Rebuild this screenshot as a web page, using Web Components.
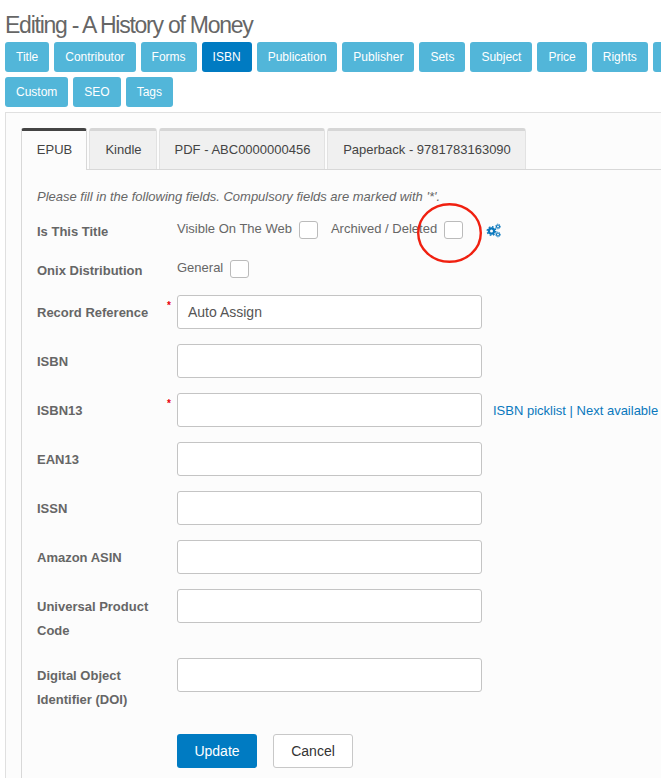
<!DOCTYPE html>
<html>
<head>
<meta charset="utf-8">
<title>Editing - A History of Money</title>
<style>
  html, body { margin: 0; height: 778px; overflow: hidden; background: #fff; }
  body { font-family: "Liberation Sans", Arial, sans-serif; color: #666; }
</style>
</head>
<body>
<edit-page></edit-page>

<script>
class NavButton extends HTMLElement {
  constructor() {
    super();
    this.attachShadow({ mode: "open" });
    this.shadowRoot.innerHTML = `
      <style>
        :host { display:block; height:30px; min-width:22px; box-sizing:border-box; padding:0 11px; border-radius:3px;
          background:#52b6d9; color:#fff; font-size:12px; line-height:30px; white-space:nowrap; }
        :host([active]) { background:#007bc2; }
      </style>
      <slot></slot>`;
  }
}

class TabItem extends HTMLElement {
  constructor() {
    super();
    this.attachShadow({ mode: "open" });
    this.shadowRoot.innerHTML = `
      <style>
        :host { display:block; box-sizing:border-box; height:41px; text-align:center; padding-left:1px;
          border:1px solid #e2e2e2; border-top:3px solid #d6d6d6; border-bottom:0; border-radius:3px 3px 0 0;
          background:#f0f0f0; color:#444; font-size:13px; line-height:38px; white-space:nowrap; }
        :host([active]) { background:#fcfcfc; border-top-color:#444; border-left-color:#d8d8d8; border-right-color:#d8d8d8;
          height:42px; margin-bottom:-1px; position:relative; }
      </style>
      <slot></slot>`;
  }
}

class CheckItem extends HTMLElement {
  constructor() {
    super();
    this.attachShadow({ mode: "open" });
    this.shadowRoot.innerHTML = `
      <style>
        :host { display:flex; align-items:center; gap:7px; font-size:13px; color:#666; white-space:nowrap; }
        .box { width:19px; height:18px; box-sizing:border-box; border:1px solid #bbb; border-radius:3px; background:#fff; margin-top:1px; }
        .txt { margin-top:-2px; }
      </style>
      <span class="txt"><slot></slot></span><span class="box"></span>`;
  }
}

class TextField extends HTMLElement {
  static get observedAttributes() { return ["value"]; }
  constructor() {
    super();
    this.attachShadow({ mode: "open" });
    this.shadowRoot.innerHTML = `
      <style>
        :host { display:block; width:305px; height:34px; box-sizing:border-box; padding:0 10px; border:1px solid #c4c4c4;
          border-radius:3px; background:#fff; color:#555; font-size:14px; line-height:32px; }
      </style>
      <span id="v"></span>`;
  }
  connectedCallback() { this.render(); }
  attributeChangedCallback() { this.render(); }
  render() { this.shadowRoot.getElementById("v").textContent = this.getAttribute("value") || ""; }
}

class FormRow extends HTMLElement {
  static get observedAttributes() { return ["label", "required"]; }
  constructor() {
    super();
    this.attachShadow({ mode: "open" });
    this.shadowRoot.innerHTML = `
      <style>
        :host { display:grid; grid-template-columns:140px 1fr; margin-bottom:15px; }
        .lab { position:relative; padding-top:var(--lab-top, 6px); font-size:13px; font-weight:bold; line-height:24px; color:#666; }
        .lab b { position:absolute; right:6px; top:5px; color:#e8000d; font-size:10px; line-height:12px; display:none; }
        :host([required]) .lab b { display:block; }
        .ctl { display:flex; align-items:flex-start; min-height:34px; }
      </style>
      <div class="lab"><span id="l"></span><b>*</b></div>
      <div class="ctl"><slot></slot></div>`;
  }
  connectedCallback() { this.render(); }
  attributeChangedCallback() { this.render(); }
  render() { this.shadowRoot.getElementById("l").innerHTML = this.getAttribute("label") || ""; }
}

class EditPage extends HTMLElement {
  constructor() {
    super();
    this.attachShadow({ mode: "open" });
    const nav = ["Title", "Contributor", "Forms", "ISBN", "Publication", "Publisher", "Sets", "Subject", "Price", "Rights", "", "Custom", "SEO", "Tags"];
    const tabs = [["EPUB", 66], ["Kindle", 68], ["PDF - ABC0000000456", 166], ["Paperback - 9781783163090", 199]];
    const fields = [
      ["Record Reference", "Auto Assign", true],
      ["ISBN"],
      ["ISBN13", "", true, true],
      ["EAN13"],
      ["ISSN"],
      ["Amazon ASIN"],
      ["Universal Product<br>Code"],
      ["Digital Object<br>Identifier (DOI)"]
    ];
    this.shadowRoot.innerHTML = `
      <style>
        :host { display:block; width:760px; padding:0 0 0 5px; box-sizing:border-box; position:relative; font-family:"Liberation Sans", Arial, sans-serif; }
        h1 { margin:0; height:42px; padding-top:12px; box-sizing:border-box; font-size:23px; line-height:26px; font-weight:normal; letter-spacing:-1.25px; color:#666; }
        .nav { display:flex; flex-wrap:wrap; gap:5px; width:700px; }
        .nav .blank { width:50px; }
        .panel { margin-top:5px; border:2px solid #e0e0e0; border-width:1px 0 0 1px; background:#fcfcfc; padding:15px 0 0 15px; height:700px; box-sizing:border-box; }
        .tabs { display:flex; gap:2px; border-bottom:1px solid #d8d8d8; height:41px; }
        .body { border-left:1px solid #d8d8d8; padding:0 0 20px 15px; }
        .note { margin:0; height:50px; padding-top:19px; box-sizing:border-box; font-size:13px; line-height:16px; font-style:italic; color:#666; }
        .checks { display:flex; align-items:center; gap:13px; }
        form-row.c1 { margin-bottom:10px; height:29px; --lab-top:0px; }
        form-row.c2 { margin-bottom:7px; height:29px; --lab-top:0px; }
        .gear { width:15px; height:15px; margin-left:10px; margin-top:2px; }
        .links { margin:9px 0 0 11px; font-size:13px; line-height:18px; color:#0a78bd; white-space:nowrap; }
        .acts { display:flex; gap:16px; padding:7px 0 0 140px; }
        .btn { height:34px; width:80px; box-sizing:border-box; border-radius:3px; text-align:center; font-size:14px; line-height:34px; }
        .up { background:#007bc2; color:#fff; }
        .ca { background:#fff; border:1px solid #c8c8c8; color:#333; line-height:32px; }
        .ring { position:absolute; left:417px; top:203px; width:65px; height:60px; }
      </style>
      <h1>Editing - A History of Money</h1>
      <div class="nav">
        ${nav.map(n => `<nav-button class="${n ? "" : "blank"}" ${n === "ISBN" ? "active" : ""}>${n}</nav-button>`).join("")}
      </div>
      <div class="panel">
        <div class="tabs">
          ${tabs.map((t, i) => `<tab-item style="width:${t[1]}px" ${i === 0 ? "active" : ""}>${t[0]}</tab-item>`).join("")}
        </div>
        <div class="body">
          <p class="note">Please fill in the following fields. Compulsory fields are marked with '*'.</p>
          <form-row class="c1" label="Is This Title">
            <div class="checks">
              <check-item>Visible On The Web</check-item>
              <check-item>Archived / Deleted</check-item>
              <svg class="gear" viewBox="0 0 15 15" fill="none" stroke="#0a78bd">
                <circle cx="5.5" cy="8" r="2.6" stroke-width="2.2"/>
                <circle cx="5.5" cy="8" r="4.3" stroke-width="1.4" stroke-dasharray="1.7 1.67"/>
                <circle cx="12" cy="3.5" r="1.5" stroke-width="1.1"/>
                <circle cx="12" cy="3.5" r="2.4" stroke-width=".9" stroke-dasharray="1 .88"/>
                <circle cx="12" cy="11.5" r="1.5" stroke-width="1.1"/>
                <circle cx="12" cy="11.5" r="2.4" stroke-width=".9" stroke-dasharray="1 .88"/>
              </svg>
            </div>
          </form-row>
          <form-row class="c2" label="Onix Distribution">
            <div class="checks"><check-item>General</check-item></div>
          </form-row>
          ${fields.map(f => `
            <form-row label="${f[0]}" ${f[2] ? "required" : ""}>
              <text-field value="${f[1] || ""}"></text-field>
              ${f[3] ? `<div class="links">ISBN picklist | Next available</div>` : ""}
            </form-row>`).join("")}
          <div class="acts">
            <div class="btn up">Update</div>
            <div class="btn ca">Cancel</div>
          </div>
        </div>
      </div>
      <svg class="ring" viewBox="0 0 65 60" fill="none"><ellipse cx="32.5" cy="30" rx="31.3" ry="28.8" stroke="#f02010" stroke-width="2.4"/></svg>`;
  }
}

customElements.define("nav-button", NavButton);
customElements.define("tab-item", TabItem);
customElements.define("check-item", CheckItem);
customElements.define("text-field", TextField);
customElements.define("form-row", FormRow);
customElements.define("edit-page", EditPage);
</script>
</body>
</html>
